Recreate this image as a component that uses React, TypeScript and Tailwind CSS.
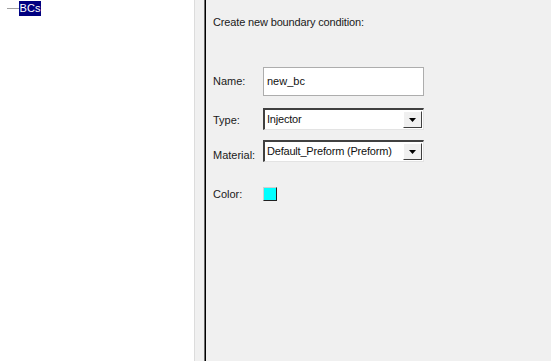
import type { ReactNode } from "react";

function Label({ children }: { children: ReactNode }) {
  return <div className="w-[50px] text-[11px] leading-[13px] text-[#1a1a1a]">{children}</div>;
}

function Combo({ value }: { value: string }) {
  return (
    <div className="flex h-[22px] w-[161px] items-stretch border-t-2 border-l-2 border-t-[#404040] border-l-[#404040] border-b border-r border-b-[#e3e3e3] border-r-[#e3e3e3] bg-white">
      <div className="flex flex-1 items-center pl-[2px] text-[11px] tracking-[-0.2px] text-[#111]">{value}</div>
      <div className="my-[1px] mr-[1px] flex w-[19px] items-center justify-center border border-t-white border-l-white border-b-[#404040] border-r-[#404040] bg-[#f0f0f0]">
        <svg width="7" height="4" viewBox="0 0 7 4">
          <path d="M0 0h7L3.5 4z" fill="#000" />
        </svg>
      </div>
    </div>
  );
}

export default function App() {
  return (
    <div className="flex h-[361px] w-[551px] overflow-hidden bg-[#f0f0f0] font-['Liberation_Sans',Arial,sans-serif]">
      {/* tree */}
      <div className="w-[195px] shrink-0 border-r border-[#dcdcdc] bg-white">
        <div className="flex items-center pt-[1px]">
          <div className="ml-[7px] h-px w-[12px] bg-[#a0a0a0]" />
          <div className="flex h-[15px] w-[22px] items-center justify-center bg-[#000080] text-[11px] text-white">BCs</div>
        </div>
      </div>
      <div className="w-[9px] shrink-0 bg-[#f0f0f0]" />
      <div className="w-px shrink-0 bg-[#6d6d6d]" />
      <div className="w-px shrink-0 bg-black" />

      {/* form */}
      <div className="flex flex-1 flex-col pl-[7px] pt-[16px]">
        <div className="text-[11px] leading-[13px] tracking-[-0.15px] text-[#1a1a1a]">Create new boundary condition:</div>

        <div className="mt-[38px] flex items-center">
          <Label>Name:</Label>
          <div className="flex h-[29px] w-[161px] items-center border border-[#adadad] bg-white pl-[3px] text-[11px] text-[#111]">
            new_bc
          </div>
        </div>

        <div className="mt-[12px] flex items-center">
          <div className="pt-[2px]">
            <Label>Type:</Label>
          </div>
          <Combo value="Injector" />
        </div>

        <div className="mt-[10px] flex items-center">
          <div className="pt-[8px]">
            <Label>Material:</Label>
          </div>
          <Combo value="Default_Preform (Preform)" />
        </div>

        <div className="mt-[25px] flex items-center">
          <Label>Color:</Label>
          <div className="h-[14px] w-[14px] border border-t-[#d0d0d0] border-l-[#d0d0d0] border-b-[#202020] border-r-[#202020] bg-[#00ffff]" />
        </div>
      </div>
    </div>
  );
}
